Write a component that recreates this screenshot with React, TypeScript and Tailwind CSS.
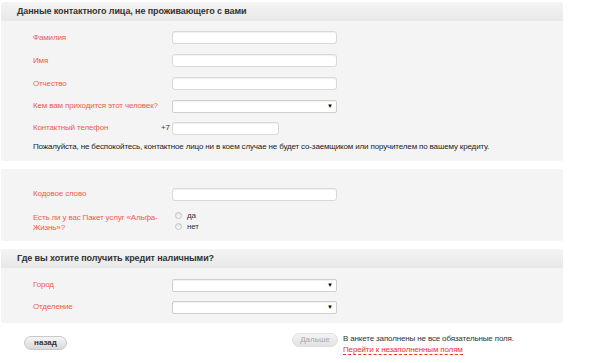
import type { ReactNode } from 'react'

const labelCls = 'text-[8px] leading-[10px] tracking-[-0.15px] text-[#ef5a50]'
const smallText = 'text-[8px] tracking-[-0.15px]'
const inputCls =
  'h-[13px] rounded-[3px] border border-[#d9d9d9] bg-white shadow-[inset_0_1px_1px_rgba(0,0,0,0.06)]'

function Header({ children }: { children: ReactNode }) {
  return (
    <div className="flex h-[19px] items-center rounded-t-[3px] bg-gradient-to-b from-[#f4f4f4] to-[#e7e8e7] pl-[16px] text-[9px] font-bold tracking-[-0.1px] text-[#333]">
      {children}
    </div>
  )
}

function TextInput({ width = 'w-[165px]' }: { width?: string }) {
  return <div className={`${inputCls} ${width}`} />
}

function Select() {
  return (
    <div className="flex h-[13px] w-[165px] items-center justify-end rounded-[2px] border border-[#cfcfcf] bg-white pr-[3px] shadow-[inset_0_1px_1px_rgba(0,0,0,0.06)]">
      <span className="text-[6px] leading-none text-black">▼</span>
    </div>
  )
}

function Row({ label, h = 'h-[23px]', children }: { label: string; h?: string; children: ReactNode }) {
  return (
    <div className={`flex items-center ${h}`}>
      <div className={`w-[139px] ${labelCls}`}>{label}</div>
      {children}
    </div>
  )
}

function Radio({ label }: { label: string }) {
  return (
    <div className="flex h-[11px] items-center">
      <span className="ml-[3px] h-[7px] w-[7px] rounded-full border border-[#c4c4c4] bg-gradient-to-b from-[#e2e2e2] to-[#fafafa]" />
      <span className={`ml-[5px] text-[#333] ${smallText}`}>{label}</span>
    </div>
  )
}

export default function App() {
  return (
    <div className="h-[363px] w-[600px] overflow-hidden bg-white font-['Liberation_Sans',Arial,sans-serif]">
      <div className="w-[563px] pl-[1px] pt-[2px]">
        {/* контактное лицо */}
        <div className="rounded-[3px] bg-[#f4f4f4]">
          <Header>Данные контактного лица, не проживающего с вами</Header>
          <div className="pb-[8px] pl-[32px] pt-[5px]">
            <Row label="Фамилия">
              <TextInput />
            </Row>
            <Row label="Имя">
              <TextInput />
            </Row>
            <Row label="Отчество">
              <TextInput />
            </Row>
            <Row label="Кем вам приходится этот человек?" h="h-[22px]">
              <Select />
            </Row>
            <div className="flex h-[22px] items-center">
              <div className={`w-[128px] ${labelCls}`}>Контактный телефон</div>
              <span className={`w-[11px] text-[#333] ${smallText}`}>+7</span>
              <TextInput width="w-[107px]" />
            </div>
            <p className={`mt-[2px] leading-[12px] text-[#222] ${smallText}`}>
              Пожалуйста, не беспокойтесь, контактное лицо ни в коем случае не будет со-заемщиком или поручителем по вашему кредиту.
            </p>
          </div>
        </div>

        {/* кодовое слово */}
        <div className="mt-[8px] rounded-[3px] bg-[#f4f4f4] pb-[8px] pl-[32px] pt-[13px]">
          <Row label="Кодовое слово" h="h-[24px]">
            <TextInput />
          </Row>
          <div className="mt-[4px] flex">
            <div className={`w-[139px] pr-[11px] pt-[3px] ${labelCls}`}>
              Есть ли у вас Пакет услуг «Альфа-Жизнь»?
            </div>
            <div>
              <Radio label="да" />
              <Radio label="нет" />
            </div>
          </div>
        </div>

        {/* отделение */}
        <div className="mt-[8px] rounded-[3px] bg-[#f4f4f4]">
          <Header>Где вы хотите получить кредит наличными?</Header>
          <div className="pb-[5px] pl-[32px] pt-[6px]">
            <Row label="Город" h="h-[22px]">
              <Select />
            </Row>
            <Row label="Отделение" h="h-[22px]">
              <Select />
            </Row>
          </div>
        </div>

        <div className="flex items-start pl-[23px]">
          <button className="mt-[13px] h-[14px] w-[43px] rounded-full border border-[#c9c9c9] bg-gradient-to-b from-[#f6f6f6] to-[#d9d9d9] text-[8px] font-bold leading-none text-[#333]">
            назад
          </button>
          <button className="ml-[225px] mt-[10px] h-[14px] w-[46px] rounded-full border border-[#e0e0e0] bg-gradient-to-b from-[#f4f4f4] to-[#e2e2e2] text-[8px] leading-none text-[#a9a9a9]">
            Дальше
          </button>
          <div className={`ml-[5px] mt-[10px] leading-[11px] ${smallText}`}>
            <div className="text-[#333]">В анкете заполнены не все обязательные поля.</div>
            <a className="border-b border-dashed border-[#e8322c] text-[#e8322c]">Перейти к незаполненным полям</a>
          </div>
        </div>
      </div>
    </div>
  )
}
